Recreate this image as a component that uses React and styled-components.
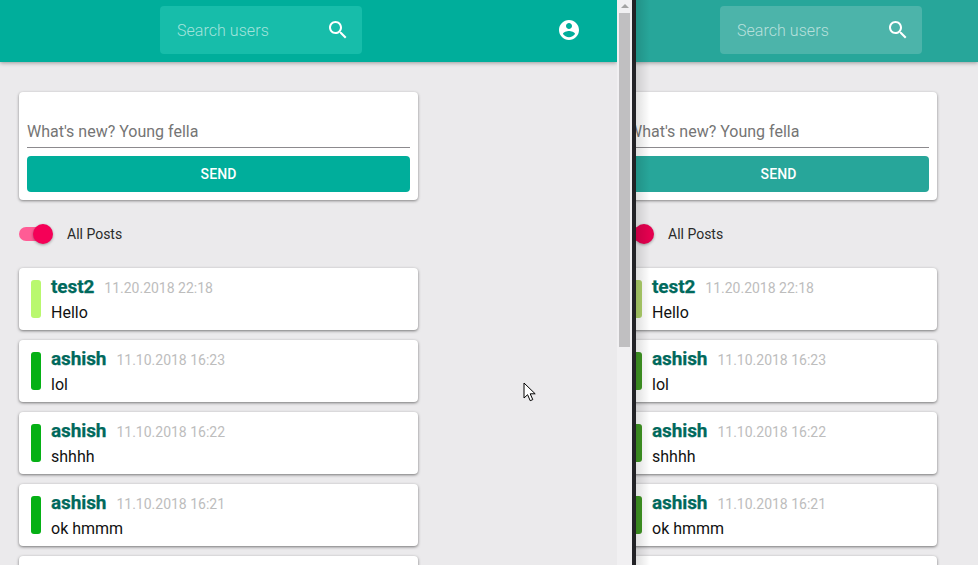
import React from "react";
import styled, { createGlobalStyle } from "styled-components";

const posts = [
  { name: "test2", date: "11.20.2018 22:18", text: "Hello", lime: true },
  { name: "ashish", date: "11.10.2018 16:23", text: "lol" },
  { name: "ashish", date: "11.10.2018 16:22", text: "shhhh" },
  { name: "ashish", date: "11.10.2018 16:21", text: "ok hmmm" },
];

const SearchIcon = () => (
  <svg width="24" height="24" viewBox="0 0 24 24" fill="#fff">
    <path d="M15.5 14h-.79l-.28-.27C15.41 12.59 16 11.11 16 9.5 16 5.91 13.09 3 9.5 3S3 5.91 3 9.5 5.91 16 9.5 16c1.61 0 3.09-.59 4.23-1.57l.27.28v.79l5 4.99L20.49 19l-4.99-5zm-6 0C7.01 14 5 11.99 5 9.5S7.01 5 9.5 5 14 7.01 14 9.5 11.99 14 9.5 14z" />
  </svg>
);

const AccountIcon = () => (
  <svg width="24" height="24" viewBox="0 0 24 24" fill="#fff">
    <path d="M12 2C6.48 2 2 6.48 2 12s4.48 10 10 10 10-4.48 10-10S17.52 2 12 2zm0 3c1.66 0 3 1.34 3 3s-1.34 3-3 3-3-1.34-3-3 1.34-3 3-3zm0 14.2c-2.5 0-4.71-1.28-6-3.22.03-1.99 4-3.08 6-3.08 1.99 0 5.97 1.09 6 3.08-1.29 1.94-3.5 3.22-6 3.22z" />
  </svg>
);

const Feed = ({ tone, searchLeft, cardWidth, showAccount }) => (
  <Page>
    <Header $tone={tone} $searchLeft={searchLeft}>
      <SearchBox $tone={tone}>
        <SearchLabel>Search users</SearchLabel>
        <SearchIcon />
      </SearchBox>
      {showAccount && (
        <AccountSlot>
          <AccountIcon />
        </AccountSlot>
      )}
    </Header>
    <Content $cardWidth={cardWidth}>
      <Composer>
        <ComposerInput>What's new? Young fella</ComposerInput>
        <SendButton $tone={tone}>SEND</SendButton>
      </Composer>
      <ToggleRow>
        <Switch>
          <SwitchTrack $tone={tone} />
          <SwitchThumb $tone={tone} />
        </Switch>
        <ToggleLabel>All Posts</ToggleLabel>
      </ToggleRow>
      <PostList>
        {posts.map((post) => (
          <PostCard key={post.date}>
            <StatusBar $tone={tone} $lime={post.lime} />
            <PostBody>
              <PostMeta>
                <PostAuthor>{post.name}</PostAuthor>
                <PostDate>{post.date}</PostDate>
              </PostMeta>
              <PostText>{post.text}</PostText>
            </PostBody>
          </PostCard>
        ))}
        <PostCard />
      </PostList>
    </Content>
  </Page>
);

export default function App() {
  return (
    <>
      <GlobalStyle />
      <Desktop>
        <FrontWindow>
          <Feed tone="front" searchLeft={160} cardWidth={399} showAccount />
          <Scrollbar>
            <ScrollArrow />
            <ScrollThumb />
          </Scrollbar>
        </FrontWindow>
        <WindowEdge />
        <BackWindow>
          <BackInner>
            <Feed tone="back" searchLeft={119} cardWidth={317} />
          </BackInner>
        </BackWindow>
        <Cursor viewBox="0 0 14 20" width="14" height="20">
          <path
            d="M1 1v15l3.6-3.3 2.6 6 2.6-1.1-2.6-5.8h5z"
            fill="#fff"
            stroke="#000"
            strokeWidth="1"
          />
        </Cursor>
      </Desktop>
    </>
  );
}

const colors = {
  front: { bar: "#00ae9b", search: "#17bdaa", toggle: "#f50057", track: "#ff5c95", green: "#05b015", lime: "#b9f86e" },
  back: { bar: "#27a69a", search: "#4cb4aa", toggle: "#e4004f", track: "#ff5c95", green: "#3f9623", lime: "#aed06a" },
};

const GlobalStyle = createGlobalStyle`
  html, body {
    margin: 0;
    padding: 0;
    background: #ebeaec;
  }
  body {
    font-family: Roboto, "Liberation Sans", sans-serif;
  }
`;

const Desktop = styled.div`
  position: relative;
  display: flex;
  width: 978px;
  height: 565px;
  overflow: hidden;
`;

const FrontWindow = styled.div`
  display: flex;
  flex: none;
  width: 632px;
  height: 100%;
`;

const WindowEdge = styled.div`
  flex: none;
  width: 4px;
  background: #222226;
`;

const BackWindow = styled.div`
  position: relative;
  flex: 1;
  min-width: 0;
  overflow: hidden;

  &::after {
    content: "";
    position: absolute;
    top: 0;
    bottom: 0;
    left: 0;
    width: 14px;
    background: linear-gradient(to right, rgba(0, 0, 0, 0.12), rgba(0, 0, 0, 0));
  }
`;

const BackInner = styled.div`
  width: 377px;
  margin-left: -35px;
`;

const Page = styled.div`
  flex: 1;
  min-width: 0;
  background: #ebeaec;
`;

const Header = styled.header`
  display: flex;
  align-items: center;
  height: 62px;
  padding-left: ${(p) => p.$searchLeft}px;
  box-sizing: border-box;
  background: ${(p) => colors[p.$tone].bar};
  box-shadow: 0 1px 4px rgba(0, 0, 0, 0.35);
`;

const SearchBox = styled.div`
  display: flex;
  align-items: center;
  justify-content: space-between;
  width: 202px;
  height: 48px;
  margin-top: -2px;
  padding: 0 12px 0 17px;
  box-sizing: border-box;
  border-radius: 4px;
  background: ${(p) => colors[p.$tone].search};
`;

const SearchLabel = styled.span`
  font-size: 16px;
  font-weight: 300;
  letter-spacing: 0.05px;
  color: rgba(255, 255, 255, 0.6);
`;

const AccountSlot = styled.div`
  display: flex;
  margin-left: auto;
  margin-right: 36px;
  margin-top: -2px;
`;

const Content = styled.main`
  width: ${(p) => p.$cardWidth}px;
  padding: 30px 0 0 19px;
`;

const Composer = styled.section`
  display: flex;
  flex-direction: column;
  padding: 28px 8px 8px;
  height: 108px;
  box-sizing: border-box;
  background: #fff;
  border-radius: 4px;
  box-shadow: 0 1px 3px rgba(0, 0, 0, 0.45);
`;

const ComposerInput = styled.div`
  height: 28px;
  line-height: 24px;
  box-sizing: border-box;
  font-size: 16px;
  color: #757575;
  border-bottom: 1px solid #8c8a8e;
  white-space: nowrap;
`;

const SendButton = styled.button`
  height: 36px;
  margin-top: 8px;
  border: 0;
  padding: 0;
  border-radius: 4px;
  background: ${(p) => colors[p.$tone].bar};
  color: #fff;
  font-family: inherit;
  font-size: 14px;
  font-weight: 500;
  letter-spacing: 0.1px;
`;

const ToggleRow = styled.div`
  display: flex;
  align-items: center;
  height: 34px;
  margin-top: 17px;
`;

const Switch = styled.span`
  position: relative;
  flex: none;
  width: 34px;
  height: 20px;
`;

const SwitchTrack = styled.span`
  position: absolute;
  left: 0;
  top: 3px;
  width: 31px;
  height: 14px;
  border-radius: 7px;
  background: ${(p) => colors[p.$tone].track};
`;

const SwitchThumb = styled.span`
  position: absolute;
  right: 0;
  top: 0;
  width: 20px;
  height: 20px;
  border-radius: 50%;
  background: ${(p) => colors[p.$tone].toggle};
  box-shadow: 0 1px 3px rgba(0, 0, 0, 0.35);
`;

const ToggleLabel = styled.span`
  margin-left: 14px;
  font-size: 14px;
  color: #2a2a2a;
`;

const PostList = styled.div`
  display: flex;
  flex-direction: column;
  gap: 10px;
  margin-top: 17px;
`;

const PostCard = styled.article`
  display: flex;
  align-items: center;
  flex: none;
  gap: 10px;
  height: 62px;
  padding: 0 12px;
  box-sizing: border-box;
  background: #fff;
  border-radius: 4px;
  box-shadow: 0 1px 3px rgba(0, 0, 0, 0.5);
`;

const StatusBar = styled.span`
  flex: none;
  width: 10px;
  height: 38px;
  border-radius: 3px;
  background: ${(p) => (p.$lime ? colors[p.$tone].lime : colors[p.$tone].green)};
`;

const PostBody = styled.div`
  display: flex;
  flex-direction: column;
  min-width: 0;
  padding-top: 2px;
`;

const PostMeta = styled.div`
  display: flex;
  align-items: baseline;
  gap: 10px;
  height: 26px;
  line-height: 24px;
`;

const PostAuthor = styled.span`
  font-size: 19px;
  font-weight: 700;
  letter-spacing: -0.1px;
  -webkit-text-stroke: 0.25px #00695c;
  color: #00695c;
`;

const PostDate = styled.span`
  font-size: 14px;
  color: #bdbdbd;
`;

const PostText = styled.div`
  font-size: 16px;
  line-height: 24px;
  color: #111;
`;

const Scrollbar = styled.div`
  flex: none;
  width: 15px;
  background: #f1f0f2;
  padding: 0 2px;
  box-sizing: border-box;
`;

const ScrollArrow = styled.div`
  width: 0;
  height: 0;
  margin: 4px auto 0;
  border-left: 4px solid transparent;
  border-right: 4px solid transparent;
  border-bottom: 4px solid #a3a3a3;
`;

const ScrollThumb = styled.div`
  width: 11px;
  height: 334px;
  margin-top: 5px;
  background: #c0bfc1;
`;

const Cursor = styled.svg`
  position: absolute;
  left: 523px;
  top: 382px;
`;
